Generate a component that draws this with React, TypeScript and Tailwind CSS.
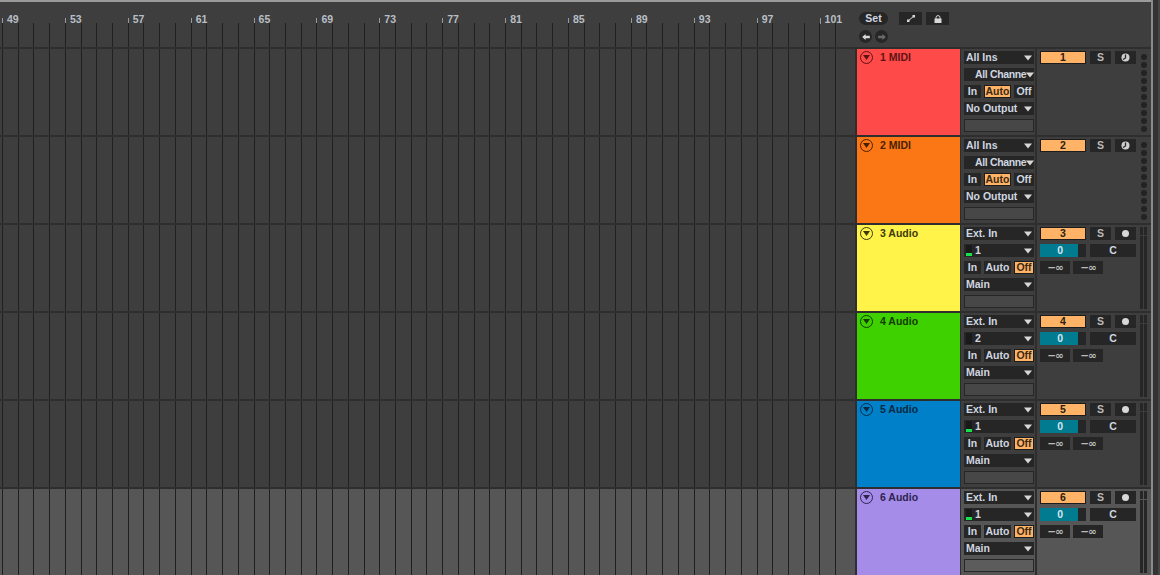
import type { ReactNode } from 'react';

const ticks = [49, 53, 57, 61, 65, 69, 73, 77, 81, 85, 89, 93, 97, 101];
const tracks = [
  { n: 1, name: '1 MIDI', color: 'bg-[#ff4a4a]', text: 'text-[#5e1414]', kind: 'midi', input: 'All Ins', ch: 'All Channe', mode: 'Auto', out: 'No Output' },
  { n: 2, name: '2 MIDI', color: 'bg-[#fb7715]', text: 'text-[#4a1f00]', kind: 'midi', input: 'All Ins', ch: 'All Channe', mode: 'Auto', out: 'No Output' },
  { n: 3, name: '3 Audio', color: 'bg-[#fff34a]', text: 'text-[#3d3a08]', kind: 'audio', input: 'Ext. In', ch: '1', mode: 'Off', out: 'Main', level: true },
  { n: 4, name: '4 Audio', color: 'bg-[#3fd000]', text: 'text-[#123d00]', kind: 'audio', input: 'Ext. In', ch: '2', mode: 'Off', out: 'Main' },
  { n: 5, name: '5 Audio', color: 'bg-[#0080c8]', text: 'text-[#062a44]', kind: 'audio', input: 'Ext. In', ch: '1', mode: 'Off', out: 'Main', level: true },
  { n: 6, name: '6 Audio', color: 'bg-[#a58ce8]', text: 'text-[#2e2450]', kind: 'audio', input: 'Ext. In', ch: '1', mode: 'Off', out: 'Main', level: true, active: true },
];
const gridCols = Array.from({ length: 54 });

function Caret() {
  return (
    <svg width="8" height="6" viewBox="0 0 8 6" className="shrink-0">
      <path d="M0 0.5h8L4 5.5z" fill="#d8d8d8" />
    </svg>
  );
}

function Fold({ text }: { text: string }) {
  return (
    <div className={`w-[13px] h-[13px] rounded-full border border-current flex items-center justify-center shrink-0 ${text}`}>
      <svg width="7" height="5" viewBox="0 0 7 5">
        <path d="M0 0h7L3.5 5z" fill="currentColor" />
      </svg>
    </div>
  );
}

function Chooser({ label, meter, dots }: { label: string; meter?: boolean; dots?: boolean }) {
  return (
    <div className="h-[13px] w-[70px] bg-[#262626] flex items-center px-[2px] text-[10.5px] font-bold text-[#cfd6e0] leading-none overflow-hidden">
      {dots && <div className="w-[9px] shrink-0" />}
      {meter !== undefined && (
        <div className="w-[6px] h-[11px] mr-[3px] shrink-0 bg-[#1a1a1a] flex flex-col justify-end">
          {meter && <div className="h-[3px] bg-[#16e24e]" />}
        </div>
      )}
      <span className={`flex-1 whitespace-nowrap ${dots ? 'tracking-[-0.35px]' : ''}`}>{label}</span>
      <Caret />
    </div>
  );
}

function Mode({ label, on, w }: { label: string; on: boolean; w: string }) {
  return (
    <div className={`h-[13px] ${w} flex items-center justify-center text-[10.5px] font-bold leading-none ${on ? 'bg-[#ffb366] text-[#3a2a14] border border-[#1c1c1c]' : 'bg-[#262626] text-[#cfd6e0]'}`}>
      {label}
    </div>
  );
}

function Small({ children, w, bright }: { children: ReactNode; w: string; bright?: boolean }) {
  return (
    <div className={`h-[13px] ${w} bg-[#262626] flex items-center justify-center text-[10.5px] font-bold leading-none ${bright ? 'text-[#cfd6e0]' : 'text-[#bbbbbb]'}`}>
      {children}
    </div>
  );
}

function Meter() {
  return (
    <div className="w-[3px] h-[82px] flex flex-col">
      <div className="h-[8px] bg-[#262626]" />
      <div className="h-[1px]" />
      <div className="flex-1 bg-[#262626]" />
    </div>
  );
}

function Track({ t }: { t: (typeof tracks)[number] }) {
  const bg = t.active ? 'bg-[#565656]' : 'bg-[#3e3e3e]';
  return (
    <div className="flex h-[88px] border-b-2 border-[#2e2e2e] bg-[#2e2e2e]">
      <div className={`w-[855px] shrink-0 flex pl-[2px] overflow-hidden ${bg}`}>
        {gridCols.map((_, i) => (
          <div key={i} className="w-[15.73px] shrink-0 border-l border-[#202020]" />
        ))}
      </div>
      <div className="w-[2px] shrink-0" />
      <div className={`w-[103px] shrink-0 ${t.color} flex items-start pl-[3px] pt-[2px] gap-[7px]`}>
        <Fold text={t.text} />
        <span className={`text-[10.5px] font-bold leading-[13px] ${t.text}`}>{t.name}</span>
      </div>
      <div className={`w-[74px] shrink-0 ml-[1px] flex flex-col gap-[4px] pt-[2px] pl-[3px] ${bg}`}>
        <Chooser label={t.input} />
        {t.kind === 'midi' ? <Chooser label={t.ch} dots /> : <Chooser label={t.ch} meter={!!t.level} />}
        <div className="flex gap-[3px] w-[70px]">
          <Mode label="In" on={false} w="w-[17px]" />
          <Mode label="Auto" on={t.mode === 'Auto'} w="w-[27px]" />
          <Mode label="Off" on={t.mode === 'Off'} w="w-[20px]" />
        </div>
        <Chooser label={t.out} />
        <div className={`h-[13px] w-[70px] border border-[#262626] ${t.active ? 'bg-[#5c5c5c]' : 'bg-[#474747]'}`} />
      </div>
      <div className="w-[2px] shrink-0" />
      <div className={`flex-1 flex pt-[2px] pl-[3px] ${bg}`}>
        <div className="w-[100px] shrink-0 flex flex-col gap-[4px]">
          <div className="flex gap-[4px]">
            <div className="h-[13px] w-[46px] bg-[#ffb366] border border-[#1c1c1c] flex items-center justify-center text-[10.5px] font-bold text-[#2a2010] leading-none">{t.n}</div>
            <Small w="w-[21px]">S</Small>
            <Small w="w-[21px]">
              {t.kind === 'midi' ? (
                <svg width="9" height="9" viewBox="0 0 9 9">
                  <circle cx="4.5" cy="4.5" r="4" fill="#cfcfcf" />
                  <path d="M4.5 1.5v3.5L2 6.5" stroke="#262626" strokeWidth="1.3" fill="none" />
                </svg>
              ) : (
                <div className="w-[7px] h-[7px] rounded-full bg-[#d8d8d8]" />
              )}
            </Small>
          </div>
          {t.kind === 'audio' && (
            <>
              <div className="flex gap-[4px]">
                <div className="h-[13px] w-[46px] bg-[#262626] flex text-[10.5px] font-bold leading-none">
                  <div className="w-[38px] h-full bg-[#007b8f] flex items-center justify-end pr-[15px] text-[#d6e6ec]">0</div>
                </div>
                <Small w="w-[46px]" bright>C</Small>
              </div>
              <div className="flex gap-[3px] font-['DejaVu_Sans',sans-serif] tracking-[-1px]">
                <Small w="w-[30px]">−∞</Small>
                <Small w="w-[30px]">−∞</Small>
              </div>
            </>
          )}
        </div>
        {t.kind === 'midi' ? (
          <div className="w-[8px] flex flex-col gap-[2px] items-center pt-[3px]">
            {Array.from({ length: 10 }).map((_, i) => (
              <div key={i} className="w-[6px] h-[6px] rounded-full bg-[#232323] shrink-0" />
            ))}
          </div>
        ) : (
          <div className="flex gap-[1px]">
            <Meter />
            <Meter />
          </div>
        )}
      </div>
    </div>
  );
}

export default function App() {
  return (
    <div className="w-[1160px] h-[575px] overflow-hidden bg-[#3e3e3e] font-['Liberation_Sans',sans-serif] flex">
      <div className="w-[1151px] shrink-0">
        <div className="h-[2px] bg-[#9a9a9a]" />
        <div className="flex h-[47px] border-b-2 border-[#2e2e2e]">
          <div className="w-[855px] shrink-0 flex flex-col pl-[2px] overflow-hidden">
            <div className="flex h-[22px] items-end pt-[10px]">
              {ticks.map((n) => (
                <div key={n} className="w-[62.9px] shrink-0 flex items-end h-[12px] text-[10.5px] font-bold text-[#b8bec6] leading-none">
                  <div className="w-[1px] h-[6px] bg-[#999999] mr-[4px]" />
                  <span>{n}</span>
                </div>
              ))}
            </div>
            <div className="flex flex-1 -mt-[1px]">
              {gridCols.map((_, i) => (
                <div key={i} className="w-[15.73px] shrink-0 border-l border-[#202020]" />
              ))}
            </div>
          </div>
          <div className="w-[2px] shrink-0" />
          <div className="flex-1 pl-[2px] pt-[10px]">
            <div className="flex gap-[11px] items-center">
              <div className="w-[29px] h-[13px] rounded-full bg-[#262626] flex items-center justify-center text-[10.5px] font-bold text-[#cfd6e0] leading-none">Set</div>
              <div className="flex gap-[4px]">
                <div className="w-[23px] h-[13px] bg-[#262626] flex items-center justify-center">
                  <svg width="8" height="7" viewBox="0 0 8 7">
                    <path d="M1 6 7 1" stroke="#d8d8d8" strokeWidth="1" />
                    <rect x="0" y="4.5" width="2.5" height="2.5" fill="#d8d8d8" />
                    <rect x="5.5" y="0" width="2.5" height="2.5" fill="#d8d8d8" />
                  </svg>
                </div>
                <div className="w-[23px] h-[13px] bg-[#262626] flex items-center justify-center">
                  <svg width="8" height="8" viewBox="0 0 8 8">
                    <path d="M2 4V2.6a2 2 0 0 1 4 0V4" stroke="#d8d8d8" strokeWidth="1" fill="none" />
                    <rect x="0.5" y="3.5" width="7" height="4.5" fill="#d8d8d8" />
                  </svg>
                </div>
              </div>
            </div>
            <div className="flex gap-[3px] mt-[5px]">
              <div className="w-[13px] h-[13px] rounded-full bg-[#262626] flex items-center justify-center">
                <svg width="8" height="6" viewBox="0 0 9 7"><path d="M0 3.5 4 0v2h5v3H4v2z" fill="#d8d8d8" /></svg>
              </div>
              <div className="w-[13px] h-[13px] rounded-full bg-[#262626] flex items-center justify-center">
                <svg width="8" height="6" viewBox="0 0 9 7"><path d="M9 3.5 5 0v2H0v3h5v2z" fill="#6a6a6a" /></svg>
              </div>
            </div>
          </div>
        </div>
        {tracks.map((t) => (
          <Track key={t.n} t={t} />
        ))}
      </div>
      <div className="w-[2px] bg-[#8a8a8a]" />
      <div className="w-[5px] bg-[#333333]" />
      <div className="flex-1 bg-[#454545]" />
    </div>
  );
}
